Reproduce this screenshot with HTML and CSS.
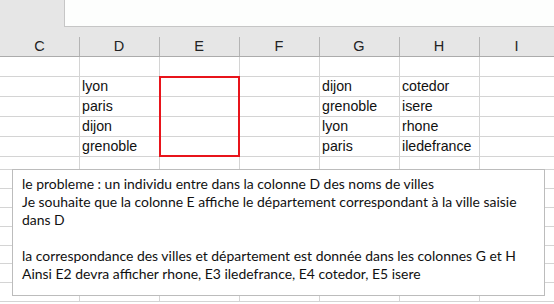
FILE: index.html
```html
<!DOCTYPE html>
<html lang="fr">
<head>
<meta charset="utf-8">
<link rel="stylesheet" href="styles.css">
</head>
<body>
<div class="app">
  <div class="topbar">
    <div class="corner"></div>
    <div class="formula"></div>
  </div>
  <div class="headers">
    <div class="hcell first">C</div>
    <div class="hcell">D</div>
    <div class="hcell">E</div>
    <div class="hcell">F</div>
    <div class="hcell">G</div>
    <div class="hcell">H</div>
    <div class="hcell">I</div>
  </div>
  <div class="sheet">
    <div class="c"></div><div class="c"></div><div class="c"></div><div class="c"></div><div class="c"></div><div class="c"></div><div class="c"></div>
    <div class="c"></div><div class="c">lyon</div><div class="c"></div><div class="c"></div><div class="c">dijon</div><div class="c">cotedor</div><div class="c"></div>
    <div class="c"></div><div class="c">paris</div><div class="c"></div><div class="c"></div><div class="c">grenoble</div><div class="c">isere</div><div class="c"></div>
    <div class="c"></div><div class="c">dijon</div><div class="c"></div><div class="c"></div><div class="c">lyon</div><div class="c">rhone</div><div class="c"></div>
    <div class="c"></div><div class="c">grenoble</div><div class="c"></div><div class="c"></div><div class="c">paris</div><div class="c">iledefrance</div><div class="c"></div>
    <div class="c"></div><div class="c"></div><div class="c"></div><div class="c"></div><div class="c"></div><div class="c"></div><div class="c"></div>
    <div class="c"></div><div class="c"></div><div class="c"></div><div class="c"></div><div class="c"></div><div class="c"></div><div class="c"></div>
    <div class="c"></div><div class="c"></div><div class="c"></div><div class="c"></div><div class="c"></div><div class="c"></div><div class="c"></div>
    <div class="c"></div><div class="c"></div><div class="c"></div><div class="c"></div><div class="c"></div><div class="c"></div><div class="c"></div>
    <div class="c"></div><div class="c"></div><div class="c"></div><div class="c"></div><div class="c"></div><div class="c"></div><div class="c"></div>
    <div class="c"></div><div class="c"></div><div class="c"></div><div class="c"></div><div class="c"></div><div class="c"></div><div class="c"></div>
    <div class="c"></div><div class="c"></div><div class="c"></div><div class="c"></div><div class="c"></div><div class="c"></div><div class="c"></div>
    <div class="c"></div><div class="c"></div><div class="c"></div><div class="c"></div><div class="c"></div><div class="c"></div><div class="c"></div>
    <div class="outline"></div>
  </div>
  <div class="note">
    <p>le probleme : un individu entre dans la colonne D des noms de villes</p>
    <p>Je souhaite que la colonne E affiche le département correspondant à la ville saisie</p>
    <p>dans D</p>
    <p>&nbsp;</p>
    <p>la correspondance des villes et département est donnée dans les colonnes G et H</p>
    <p>Ainsi E2 devra afficher rhone, E3 iledefrance, E4 cotedor, E5 isere</p>
  </div>
</div>
</body>
</html>
```
FILE: styles.css
```css
* { box-sizing: border-box; }
html, body { margin: 0; padding: 0; }
body {
  width: 554px;
  height: 304px;
  overflow: hidden;
  background: #fff;
  font-family: "Liberation Sans", Arial, sans-serif;
  font-size: 14.2px;
  color: #111;
}
.app { position: relative; width: 554px; height: 304px; overflow: hidden; }
.topbar { display: flex; height: 27px; background: #e6e6e6; }
.corner { width: 64px; }
.formula {
  flex: 1;
  background: #fdfefd;
  border-left: 1px solid #c6c6c6;
  border-bottom: 1px solid #c6c6c6;
}
.headers {
  display: grid;
  grid-template-columns: 79px repeat(5, 80px) 1fr;
  height: 30px;
  background: #e6e6e6;
  border-bottom: 1px solid #ababab;
}
.hcell {
  position: relative;
  text-align: center;
  padding-top: 10px;
  line-height: 19px;
  font-size: 14.5px;
  color: #222;
}
.hcell:not(.first)::before {
  content: "";
  position: absolute;
  left: 0;
  top: 10px;
  bottom: 0;
  width: 1px;
  background: #b4b4b4;
}
.sheet {
  position: relative;
  display: grid;
  grid-template-columns: 79px repeat(5, 79px) 1fr;
  grid-template-rows: repeat(5, 19px) 12px repeat(4, 18px) 17px 18px 18px;
  column-gap: 1px;
  row-gap: 1px;
  background: #d4d4d4;
  padding-bottom: 1px;
}
.c {
  background: #fff;
  line-height: 19px;
  padding-left: 2px;
  white-space: nowrap;
  overflow: hidden;
  color: #111;
}
.outline {
  position: absolute;
  left: 159px;
  top: 19px;
  width: 81px;
  height: 81px;
  border: 2px solid #e8141b;
}
.note {
  position: absolute;
  left: 12px;
  top: 169px;
  width: 533px;
  height: 127px;
  background: #fff;
  border: 1px solid #bcbcbc;
  padding: 5px 9px;
  font-family: Lato, "Liberation Sans", sans-serif;
  font-size: 13.95px;
}
.note p {
  margin: 0;
  line-height: 18px;
  white-space: nowrap;
  color: #111;
}
```
